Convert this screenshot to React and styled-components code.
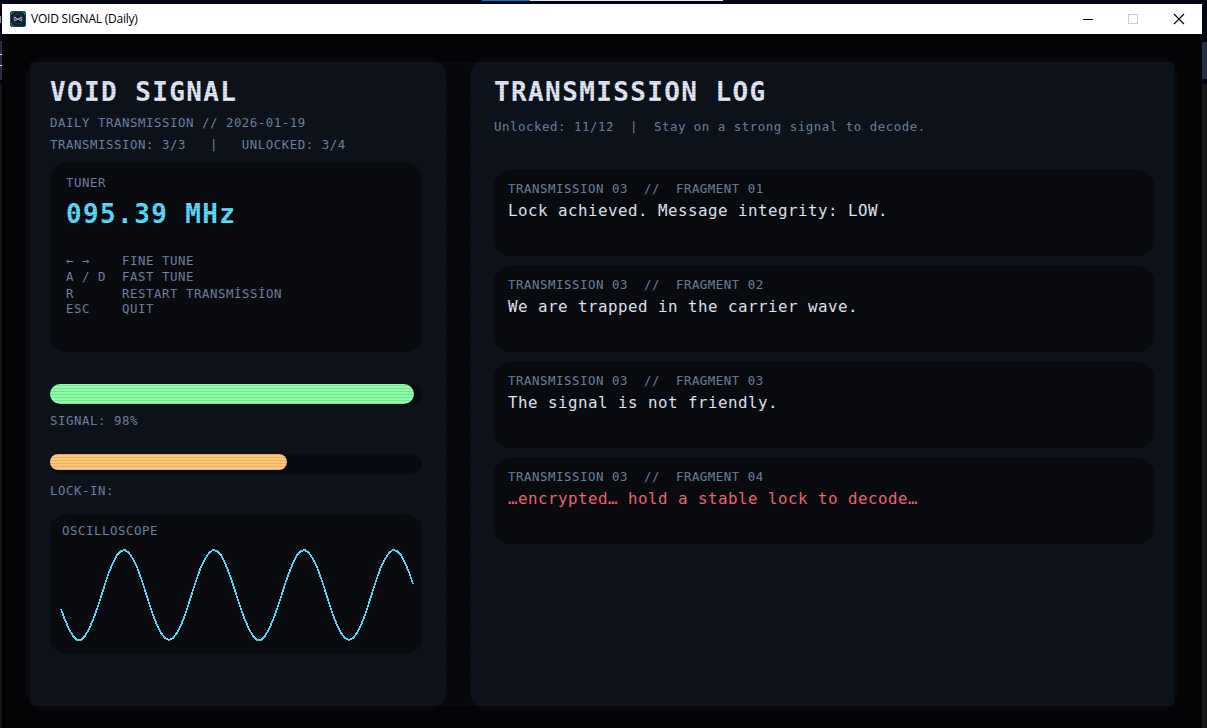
import React from "react";
import styled, { createGlobalStyle } from "styled-components";

const Global = createGlobalStyle`
  * { box-sizing: border-box; }
  html, body { margin: 0; height: 100%; overflow: hidden; }
  body { background: #020512; font-family: "DejaVu Sans Mono", "Liberation Mono", monospace; }
`;

const Desktop = styled.div`
  position: relative;
  width: 1207px;
  height: 728px;
  padding: 4px 5px 0 2px;
  overflow: hidden;
  background: linear-gradient(#020512 0 84px, #171717 84px);
`;

const Behind = styled.div`
  position: absolute;
  left: ${(p) => p.$x}px;
  top: ${(p) => p.$y}px;
  width: ${(p) => p.$w}px;
  height: ${(p) => p.$h}px;
  background: ${(p) => p.$c};
`;

const AppWindow = styled.div`
  position: relative;
  display: flex;
  flex-direction: column;
  width: 1200px;
  height: 724px;
`;

const TitleBar = styled.header`
  display: flex;
  align-items: center;
  height: 30px;
  padding: 0 16px 0 8px;
  background: #fff;
`;

const WindowTitle = styled.span`
  flex: 1;
  margin: -2px 0 0 5px;
  font: 12px "Open Sans", "Noto Sans", sans-serif;
  letter-spacing: -0.22px;
  color: #000;
`;

const Controls = styled.div`
  display: flex;
  gap: 34px;
  padding-right: 1px;
  margin-top: -1px;
  svg { display: block; }
`;

const Stage = styled.main`
  position: relative;
  flex: 1;
  display: flex;
  gap: 24px;
  padding: 24px;
  background: #08090c;
  height: 694px;
`;

const Vignette = styled.div`
  position: absolute;
  inset: 0;
  border: solid rgba(0, 0, 0, 0.5);
  border-width: 28px 28px 22px 28px;
  pointer-events: none;
`;

const Scanlines = styled.div`
  position: absolute;
  inset: 0;
  background: repeating-linear-gradient(rgba(0, 0, 0, 0.12) 0 1px, transparent 1px 3px);
  pointer-events: none;
`;

const Panel = styled.section`
  width: ${(p) => p.$width}px;
  height: 652px;
  padding: 17px 24px 0;
  border-radius: 18px;
  background: #0e131b;
`;

const Title = styled.h1`
  margin: ${(p) => p.$gap || 0}px 0 0;
  height: 34px;
  font-size: 26px;
  line-height: 34px;
  font-weight: 700;
  letter-spacing: 1.38px;
  white-space: pre;
  color: ${(p) => p.$color || "#e1e8f8"};
`;

const Label = styled.div`
  height: ${(p) => p.$h || 16}px;
  margin-top: ${(p) => p.$gap || 0}px;
  font-size: 12.4px;
  line-height: 16px;
  letter-spacing: 0.535px;
  white-space: pre;
  color: #7083a3;
`;

const Card = styled.div`
  width: 372px;
  height: ${(p) => p.$height}px;
  margin-top: ${(p) => p.$gap}px;
  padding: ${(p) => p.$pad};
  border-radius: 16px;
  background: #0a0b10;
`;

const Keys = styled.div`
  margin-top: 22px;
`;

const KeyRow = styled(Label)`
  display: grid;
  grid-template-columns: 56px 1fr;
`;

const Track = styled.div`
  width: 372px;
  height: 20px;
  margin-top: ${(p) => p.$gap}px;
  border-radius: 10px;
  background: #0a0b10;
`;

const Fill = styled.div`
  width: ${(p) => p.$w}px;
  height: ${(p) => p.$h}px;
  border-radius: 10px;
  background: ${(p) => p.$c};
`;

const Wave = styled.svg`
  display: block;
  margin: 8px 0 0 -2px;
`;

const LogList = styled.div`
  display: flex;
  flex-direction: column;
  gap: 10px;
  margin-top: 35px;
`;

const Entry = styled.article`
  width: 660px;
  height: 86px;
  padding: 11px 14px;
  border-radius: 16px;
  background: #0a0b10;
`;

const Message = styled.p`
  margin: 3px 0 0;
  font-size: 15.8px;
  line-height: 22px;
  letter-spacing: 0.49px;
  white-space: pre;
  color: ${(p) => (p.$locked ? "#ee6b73" : "#e1e8f8")};
`;

const keys = [
  ["← →", "FINE TUNE", 16],
  ["A / D", "FAST TUNE", 17],
  ["R", "RESTART TRANSMİSSİON", 15],
  ["ESC", "QUIT", 16],
];

const entries = [
  ["01", "Lock achieved. Message integrity: LOW."],
  ["02", "We are trapped in the carrier wave."],
  ["03", "The signal is not friendly."],
  ["04", "…encrypted… hold a stable lock to decode…", true],
];

const wavePoints = Array.from({ length: 89 }, (_, i) => {
  const x = i * 4 + 1;
  const y = 48 - 45 * Math.cos(((x - 64) / 90) * 2 * Math.PI);
  return `${x},${Math.round(y)}`;
}).join(" ");

const AppIcon = () => (
  <svg width="16" height="16" viewBox="0 0 16 16">
    <rect x="0.5" y="0.5" width="15" height="15" rx="1.5" fill="#13202c" stroke="#1c4a55" />
    <path d="M1.5 4V1.5H4M12 1.5h2.5V4M1.5 12v2.5H4" fill="none" stroke="#2b7f88" strokeWidth="0.8" />
    <circle cx="8" cy="8" r="5" fill="none" stroke="#263f4d" />
    <path d="M4.8 5.8v4.4M11.2 5.8v4.4M5 6.3 8 8.6l3-2.3M5.5 10 8 7.5l2.5 2.5" fill="none" stroke="#c5cfd4" strokeWidth="0.9" />
  </svg>
);

export default function App() {
  return (
    <Desktop>
      <Global />
      <Behind $x={482} $y={0} $w={48} $h={1} $c="#0a78d6" />
      <Behind $x={530} $y={0} $w={193} $h={1} $c="#e8e8e8" />
      <Behind $x={0} $y={16} $w={1} $h={7} $c="#8d929c" />
      <Behind $x={0} $y={41} $w={2} $h={39} $c="#252d43" />
      <Behind $x={0} $y={54} $w={2} $h={1} $c="#e8e8e8" />
      <Behind $x={0} $y={65} $w={2} $h={1} $c="#e8e8e8" />
      <Behind $x={1202} $y={42} $w={5} $h={37} $c="#252d48" />
      <AppWindow>
        <TitleBar>
          <AppIcon />
          <WindowTitle>VOID SIGNAL (Daily)</WindowTitle>
          <Controls>
            <svg width="12" height="12"><path d="M1 6.5h10" stroke="#000" /></svg>
            <svg width="11" height="12"><rect x="0.5" y="1.5" width="9" height="9" fill="none" stroke="#ccc" /></svg>
            <svg width="12" height="12"><path d="M1 1l10 10M11 1L1 11" stroke="#000" strokeWidth="1.1" /></svg>
          </Controls>
        </TitleBar>
        <Stage>
          <Panel $width={420}>
            <Title>VOID SIGNAL</Title>
            <Label $gap={6}>DAILY TRANSMISSION // 2026-01-19</Label>
            <Label $gap={6}>{"TRANSMISSION: 3/3   |   UNLOCKED: 3/4"}</Label>
            <Card $height={190} $gap={9} $pad="13px 16px">
              <Label>TUNER</Label>
              <Title $gap={6} $color="#5bdcfb">095.39 MHz</Title>
              <Keys>
                {keys.map(([key, action, h]) => (
                  <KeyRow key={key} $h={h}>
                    <span>{key}</span>
                    <span>{action}</span>
                  </KeyRow>
                ))}
              </Keys>
            </Card>
            <Track $gap={32}><Fill $w={364} $h={20} $c="#8dffa8" /></Track>
            <Label $gap={9}>SIGNAL: 98%</Label>
            <Track $gap={25}><Fill $w={237} $h={16} $c="#ffc878" /></Track>
            <Label $gap={9}>LOCK-IN:</Label>
            <Card $height={140} $gap={15} $pad="9px 12px">
              <Label>OSCILLOSCOPE</Label>
              <Wave width="356" height="96">
                <polyline points={wavePoints} fill="none" stroke="#5bdcfb" strokeWidth="1.8" shapeRendering="crispEdges" />
              </Wave>
            </Card>
          </Panel>
          <Panel $width={708}>
            <Title>TRANSMISSION LOG</Title>
            <Label $gap={10}>{"Unlocked: 11/12  |  Stay on a strong signal to decode."}</Label>
            <LogList>
              {entries.map(([id, text, locked]) => (
                <Entry key={id}>
                  <Label>{`TRANSMISSION 03  //  FRAGMENT ${id}`}</Label>
                  <Message $locked={locked}>{text}</Message>
                </Entry>
              ))}
            </LogList>
          </Panel>
          <Scanlines />
          <Vignette />
        </Stage>
      </AppWindow>
    </Desktop>
  );
}
